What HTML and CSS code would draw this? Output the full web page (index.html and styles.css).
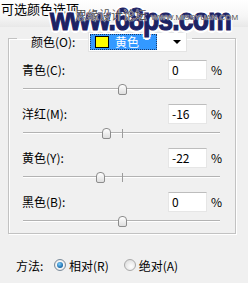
FILE: index.html
```html
<!DOCTYPE html>
<html lang="zh-CN">
<head>
<meta charset="utf-8">
<title>可选颜色选项</title>
<link rel="stylesheet" href="styles.css">
</head>
<body>
<div class="titlebar">可选颜色选项</div>

<fieldset class="group">
  <legend class="legend">
    <span class="legend-label">颜色(O):</span>
    <span class="select">
      <span class="sel-value"><span class="swatch"></span><span class="sel-text">黄色</span></span>
      <span class="arrow"></span>
    </span>
  </legend>

  <div class="row">
    <div class="field"><span class="label">青色(C):</span><span class="input">0</span><span class="pct">%</span></div>
    <div class="slider"><div class="track"></div><span class="tick"></span><span class="thumb" style="left:50%"></span></div>
  </div>
  <div class="row">
    <div class="field"><span class="label">洋红(M):</span><span class="input">-16</span><span class="pct">%</span></div>
    <div class="slider"><div class="track"></div><span class="tick"></span><span class="thumb" style="left:42%"></span></div>
  </div>
  <div class="row">
    <div class="field"><span class="label">黄色(Y):</span><span class="input">-22</span><span class="pct">%</span></div>
    <div class="slider"><div class="track"></div><span class="tick"></span><span class="thumb" style="left:39%"></span></div>
  </div>
  <div class="row">
    <div class="field"><span class="label">黑色(B):</span><span class="input">0</span><span class="pct">%</span></div>
    <div class="slider"><div class="track"></div><span class="tick"></span><span class="thumb" style="left:50%"></span></div>
  </div>
</fieldset>

<div class="method">
  <span class="method-label">方法:</span>
  <span class="radio checked"></span><span class="radio-label">相对(R)</span>
  <span class="radio second"></span><span class="radio-label">绝对(A)</span>
</div>

<div class="wm-big">www.68ps.com</div>
<div class="wm-small"><span class="wm-cn">思缘设计论坛</span><span class="wm-en">WWW.MISSYUAN.COM</span></div>
</body>
</html>
```

FILE: styles.css
```css
html, body {
  margin: 0;
  padding: 0;
}
body {
  width: 248px;
  height: 283px;
  overflow: hidden;
  position: relative;
  background: #f0f0f0;
  font-family: "Noto Sans CJK SC", "Liberation Sans", sans-serif;
  font-size: 12px;
  color: #000;
}
.titlebar {
  height: 27px;
  box-sizing: border-box;
  padding: 1px 0 0 1px;
  font-size: 13px;
  line-height: 15px;
  background: linear-gradient(#ffffff, #f6f6f6 60%, #e8e8e8);
}
.group {
  margin: 5px 0 0 8px;
  width: 228px;
  box-sizing: border-box;
  padding: 16px 0 0 0;
  border: 1px solid #c2c2c2;
  box-shadow: inset 1px 1px 0 #fff, 1px 1px 0 #fff;
  min-inline-size: 0;
}
.legend {
  margin-left: 8px;
  padding: 0 5px 0 14px;
  height: 12px;
  display: flex;
  align-items: flex-start;
}
.legend-label {
  width: 57px;
  line-height: 20px;
  height: 20px;
}
.select {
  width: 99px;
  height: 20px;
  box-sizing: border-box;
  padding: 1px;
  background: #fff;
  border: 1px solid #e4e4e4;
  display: flex;
  align-items: center;
}
.sel-value {
  width: 67px;
  height: 16px;
  box-sizing: border-box;
  background: #3399ff;
  border: 1px dotted #1d3a6a;
  display: flex;
  align-items: center;
}
.swatch {
  width: 14px;
  height: 12px;
  box-sizing: border-box;
  background: #ffff00;
  border: 1px solid #000;
  margin-left: 4px;
}
.sel-text {
  color: #fff;
  margin-left: 6px;
  line-height: 14px;
}
.arrow {
  margin-left: auto;
  margin-right: 4px;
  width: 0;
  height: 0;
  border-top: 4px solid #000;
  border-left: 4px solid transparent;
  border-right: 4px solid transparent;
}
.row {
  height: 44px;
}
.row:last-child {
  height: 41px;
}
.field {
  display: flex;
  align-items: center;
  height: 20px;
  padding-left: 13px;
}
.label {
  width: 146px;
  line-height: 20px;
}
.input {
  width: 39px;
  height: 20px;
  box-sizing: border-box;
  background: #fff;
  border: 1px solid #e6e6e6;
  border-top-color: #bdbdbd;
  padding-left: 3px;
  line-height: 18px;
}
.pct {
  margin-left: 4px;
  line-height: 20px;
}
.slider {
  position: relative;
  margin-left: 14px;
  width: 197px;
  height: 21px;
}
.track {
  position: relative;
  top: 8px;
  height: 0;
  border-top: 1px solid #b3b3b3;
  border-bottom: 1px solid #ffffff;
}
.tick {
  position: absolute;
  left: 50%;
  top: 5px;
  width: 1px;
  height: 9px;
  background: #9c9c9c;
}
.thumb {
  position: absolute;
  top: 4px;
  width: 9px;
  height: 11px;
  margin-left: -4px;
  box-sizing: border-box;
  border: 1px solid #8c8c8c;
  border-radius: 4px 4px 2px 2px;
  background: linear-gradient(#ffffff, #dedede);
}
.method {
  display: flex;
  align-items: center;
  height: 20px;
  margin-top: 21px;
  padding-left: 16px;
}
.method-label {
  width: 38px;
}
.radio {
  width: 12px;
  height: 12px;
  box-sizing: border-box;
  border-radius: 50%;
  border: 1px solid #a9a9a9;
  background: radial-gradient(circle at 60% 65%, #ffffff, #d6d6d6);
  display: flex;
  align-items: center;
  justify-content: center;
}
.radio.checked {
  border-color: #7a8a99;
  background: radial-gradient(circle, #ffffff 40%, #d0d0d0);
}
.radio.checked::after {
  content: "";
  width: 6px;
  height: 6px;
  border-radius: 50%;
  background: radial-gradient(circle at 40% 35%, #7fd0ff, #0f5fa0 75%);
}
.radio.second {
  margin-left: 15px;
}
.radio-label {
  margin-left: 3px;
}
.wm-small {
  position: absolute;
  left: 75px;
  top: 8px;
  display: flex;
  align-items: baseline;
  color: #505050;
  text-shadow: 0 0 1px #fff, 0 0 1px #fff;
}
.wm-cn {
  font-size: 12px;
  line-height: 14px;
}
.wm-en {
  font-family: "Liberation Sans", sans-serif;
  font-size: 8px;
  margin-left: 4px;
}
.wm-big {
  position: absolute;
  left: 50px;
  top: 3px;
  font-family: "Liberation Sans", sans-serif;
  font-weight: bold;
  font-size: 32px;
  line-height: 32px;
  letter-spacing: -1px;
  white-space: nowrap;
  color: #1c2264;
  -webkit-text-stroke: 1.2px #1c2264;
  transform: scaleX(0.83);
  transform-origin: left top;
  text-shadow: 2.5px 0 0 #fff, -2.5px 0 0 #fff, 0 2.5px 0 #fff, 0 -2.5px 0 #fff,
    2px 2px 0 #fff, -2px 2px 0 #fff, 2px -2px 0 #fff, -2px -2px 0 #fff;
}
```
